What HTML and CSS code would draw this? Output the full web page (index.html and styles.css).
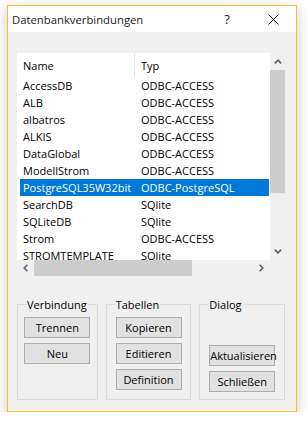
FILE: index.html
```html
<!DOCTYPE html>
<html lang="de">
  <head>
    <meta charset="UTF-8" />
    <title>Datenbankverbindungen</title>
    <link rel="stylesheet" href="styles.css">
  </head>
  <body>
    <div class="window">
      <div class="titlebar">
        <div class="title">Datenbankverbindungen</div>
        <div class="caption-btn help">?</div>
        <div class="caption-btn close">
          <svg width="11" height="11" viewBox="0 0 11 11">
            <path d="M0.5 0.5 L10.5 10.5 M10.5 0.5 L0.5 10.5" stroke="#111" stroke-width="1" fill="none"/>
          </svg>
        </div>
      </div>

      <div class="client">
        <div class="listview">
          <div class="lv-body">
            <div class="lv-header">
              <div class="hd-name">Name</div>
              <div class="hd-typ">Typ</div>
            </div>
            <div class="row"><div class="c-name">AccessDB</div><div class="c-typ">ODBC-ACCESS</div></div>
            <div class="row"><div class="c-name">ALB</div><div class="c-typ">ODBC-ACCESS</div></div>
            <div class="row"><div class="c-name">albatros</div><div class="c-typ">ODBC-ACCESS</div></div>
            <div class="row"><div class="c-name">ALKIS</div><div class="c-typ">ODBC-ACCESS</div></div>
            <div class="row"><div class="c-name">DataGlobal</div><div class="c-typ">ODBC-ACCESS</div></div>
            <div class="row"><div class="c-name">ModellStrom</div><div class="c-typ">ODBC-ACCESS</div></div>
            <div class="row selected"><div class="c-name">PostgreSQL35W32bit</div><div class="c-typ">ODBC-PostgreSQL</div></div>
            <div class="row"><div class="c-name">SearchDB</div><div class="c-typ">SQlite</div></div>
            <div class="row"><div class="c-name">SQLiteDB</div><div class="c-typ">SQlite</div></div>
            <div class="row"><div class="c-name">Strom</div><div class="c-typ">ODBC-ACCESS</div></div>
            <div class="row"><div class="c-name">STROMTEMPLATE</div><div class="c-typ">SQlite</div></div>
          </div>

          <!-- vertical scrollbar -->
          <div class="vscroll">
            <div class="arrow">
              <svg width="8" height="5" viewBox="0 0 8 5"><path d="M0.8 4.4 L4 1.2 L7.2 4.4" stroke="#606060" stroke-width="1.6" fill="none"/></svg>
            </div>
            <div class="v-thumb"></div>
            <div class="track"></div>
            <div class="arrow">
              <svg width="8" height="5" viewBox="0 0 8 5"><path d="M0.8 0.6 L4 3.8 L7.2 0.6" stroke="#606060" stroke-width="1.6" fill="none"/></svg>
            </div>
          </div>

          <!-- horizontal scrollbar -->
          <div class="hscroll">
            <div class="arrow">
              <svg width="5" height="8" viewBox="0 0 5 8"><path d="M4.4 0.8 L1.2 4 L4.4 7.2" stroke="#606060" stroke-width="1.6" fill="none"/></svg>
            </div>
            <div class="h-thumb"></div>
            <div class="track"></div>
            <div class="arrow">
              <svg width="5" height="8" viewBox="0 0 5 8"><path d="M0.6 0.8 L3.8 4 L0.6 7.2" stroke="#606060" stroke-width="1.6" fill="none"/></svg>
            </div>
          </div>
          <div class="corner"></div>
        </div>

        <div class="groups">
          <fieldset class="group g-verbindung">
            <legend>Verbindung</legend>
            <button class="btn">Trennen</button>
            <button class="btn">Neu</button>
          </fieldset>
          <fieldset class="group g-tabellen">
            <legend>Tabellen</legend>
            <button class="btn">Kopieren</button>
            <button class="btn">Editieren</button>
            <button class="btn">Definition</button>
          </fieldset>
          <fieldset class="group g-dialog">
            <legend>Dialog</legend>
            <button class="btn">Aktualisieren</button>
            <button class="btn">Schließen</button>
          </fieldset>
        </div>
      </div>
    </div>
  </body>
</html>
```

FILE: styles.css
```css
body {
    margin: 0;
    background-color: #ffffff;
    font-family: "Open Sans", "Noto Sans", sans-serif;
    font-size: 11px;
    color: #000;
}

.window {
    margin: 5px 0 0 7px;
    width: 290px;
    height: 407px;
    box-sizing: border-box;
    border: 1px solid #f2c031;
    background-color: #f0f0f0;
    display: flex;
    flex-direction: column;
    box-shadow: 0 4px 14px rgba(0, 0, 0, 0.22);
}

/* title bar */
.titlebar {
    height: 26px;
    flex-shrink: 0;
    background-color: #fff;
    display: flex;
    align-items: center;
    padding-left: 4px;
}

.title {
    flex: 1;
    font-size: 11.3px;
    color: #1a1a1a;
}

.caption-btn {
    width: 46px;
    height: 100%;
    display: flex;
    align-items: center;
    justify-content: center;
}

.help {
    font-size: 13px;
    color: #111;
}

/* client area */
.client {
    flex: 1;
    display: flex;
    flex-direction: column;
    padding: 21px 11px 11px 9px;
}

.listview {
    display: grid;
    grid-template-columns: 253px 15px;
    grid-template-rows: 207px 16px;
    background-color: #fff;
}

.lv-body {
    overflow: hidden;
}

.lv-header {
    height: 24px;
    display: flex;
    align-items: center;
}

.hd-name {
    width: 111px;
    height: 100%;
    padding-left: 6px;
    display: flex;
    align-items: center;
    border-right: 1px solid #e5e5e5;
}

.hd-typ {
    padding-left: 6px;
}

.row {
    height: 17px;
    width: 249px;
    margin-left: 3px;
    display: flex;
    align-items: center;
    white-space: nowrap;
}

.row.selected {
    background-color: #0078d7;
    color: #fff;
}

.c-name {
    width: 111px;
    padding-left: 3px;
}

.c-typ {
    padding-left: 7px;
}

/* scrollbars */
.vscroll {
    display: flex;
    flex-direction: column;
    background-color: #f0f0f0;
}

.hscroll {
    display: flex;
    background-color: #f0f0f0;
}

.arrow {
    flex: 0 0 17px;
    display: flex;
    align-items: center;
    justify-content: center;
}

.track {
    flex: 1;
}

.v-thumb {
    flex: 0 0 123px;
    background-color: #cdcdcd;
}

.h-thumb {
    flex: 0 0 158px;
    background-color: #cdcdcd;
}

.corner {
    background-color: #f0f0f0;
}

/* group boxes */
.groups {
    flex: 1;
    margin-top: 21px;
    display: flex;
    gap: 8px;
}

.group {
    margin: 0;
    min-width: 0;
    padding: 5px 0 7px;
    border: 1px solid #dcdcdc;
    display: flex;
    flex-direction: column;
    align-items: center;
    gap: 5px;
}

.group legend {
    margin-left: 8px;
    padding: 0 1px;
    line-height: 15px;
    font-size: 11px;
}

.g-verbindung { width: 81px; box-sizing: border-box; }
.g-tabellen { width: 86px; box-sizing: border-box; }
.g-dialog { width: 86px; box-sizing: border-box; justify-content: flex-end; }

.btn {
    width: 66px;
    height: 21px;
    flex-shrink: 0;
    padding: 0;
    border: 1px solid #adadad;
    background-color: #e1e1e1;
    font-family: "Open Sans", "Noto Sans", sans-serif;
    font-size: 11px;
    color: #000;
}
```
